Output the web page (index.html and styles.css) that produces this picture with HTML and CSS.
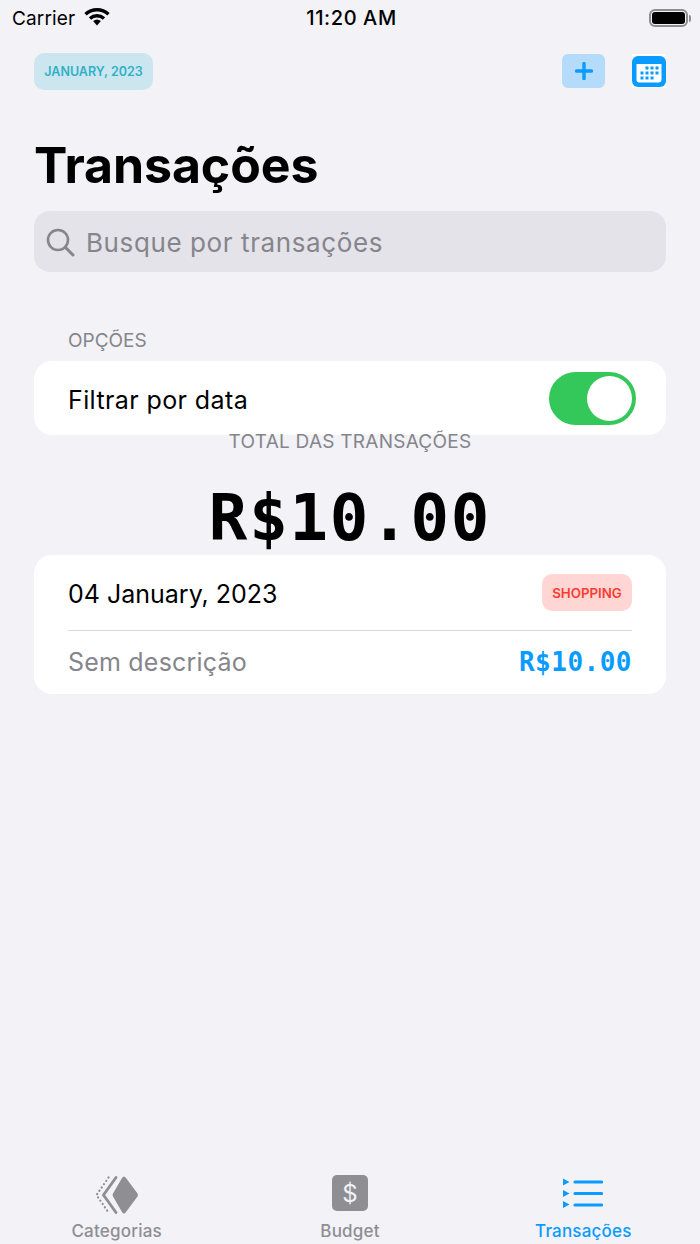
FILE: index.html
```html
<!DOCTYPE html>
<html lang="pt">
<head>
<meta charset="utf-8">
<title>Transações</title>
<link rel="stylesheet" href="styles.css">
</head>
<body>
<div class="app">
  <div class="status">
    <div class="status-left">
      <span class="carrier">Carrier</span>
      <svg class="wifi" width="26" height="19" viewBox="0 0 26 19"><path d="M1.500 7.200A17 17 0 0 1 24.500 7.200" fill="none" stroke="#000" stroke-width="3.400"/><path d="M6 11.400A10.500 10.500 0 0 1 20 11.400" fill="none" stroke="#000" stroke-width="3.400"/><path d="M13 18.500l-3.900-4.400a6 6 0 0 1 7.800 0z" fill="#000"/></svg>
    </div>
    <div class="status-time">11:20 AM</div>
    <div class="status-right">
      <div class="battery"><div class="battery-fill"></div></div>
      <div class="battery-cap"></div>
    </div>
  </div>

  <div class="topbar">
    <div class="pill">JANUARY, 2023</div>
    <div class="top-actions">
      <div class="plus-btn">
        <svg width="18" height="18" viewBox="0 0 18 18"><path d="M9 1.500V16.500M1.500 9H16.500" stroke="#0a9bff" stroke-width="3.400" stroke-linecap="round"/></svg>
      </div>
      <svg class="cal" width="34" height="34" viewBox="0 0 34 34">
        <rect width="34" height="34" fill="#fff"/>
        <rect width="34" height="31" y="2" rx="6" fill="#0a9bff"/>
        <path d="M4.500 10H29.500V25.500a3 3 0 0 1-3 3H7.500a3 3 0 0 1-3-3z" fill="#fff"/>
        <g fill="#0a9bff">
          <rect x="13.500" y="12.500" width="3" height="3"/><rect x="18.500" y="12.500" width="3" height="3"/><rect x="23.500" y="12.500" width="3" height="3"/>
          <rect x="8.500" y="17.500" width="3" height="3"/><rect x="13.500" y="17.500" width="3" height="3"/><rect x="18.500" y="17.500" width="3" height="3"/><rect x="23.500" y="17.500" width="3" height="3"/>
          <rect x="8.500" y="22.500" width="3" height="3"/><rect x="13.500" y="22.500" width="3" height="3"/><rect x="18.500" y="22.500" width="3" height="3"/>
        </g>
      </svg>
    </div>
  </div>

  <h1 class="title">Transações</h1>

  <div class="search">
    <svg width="30" height="30" viewBox="0 0 30 30"><circle cx="13" cy="13" r="10" fill="none" stroke="#85858b" stroke-width="2.600"/><path d="M20.500 20.500L28 28" stroke="#85858b" stroke-width="3" stroke-linecap="round"/></svg>
    <span class="search-text">Busque por transações</span>
  </div>

  <div class="section-label">OPÇÕES</div>
  <div class="card filter-card">
    <span class="filter-text">Filtrar por data</span>
    <div class="toggle"><div class="knob"></div></div>
  </div>

  <div class="total-label">TOTAL DAS TRANSAÇÕES</div>
  <div class="total-value">R$10.00</div>

  <div class="card tx-card">
    <div class="tx-row tx-top">
      <span class="tx-date">04 January, 2023</span>
      <span class="tag">SHOPPING</span>
    </div>
    <div class="tx-row tx-bottom">
      <span class="tx-desc">Sem descrição</span>
      <span class="tx-amount">R$10.00</span>
    </div>
  </div>

  <div class="spacer"></div>

  <nav class="tabs">
    <div class="tab">
      <svg width="44" height="40" viewBox="0 0 44 40">
        <path d="M29 1.500Q30 1.500 31 3L42.500 18.500Q43.500 20 42.500 21.500L31 37Q30 38.500 29 38.500Q28 38.500 27 37L18 21.500Q17 20 18 18.500L27 3Q28 1.500 29 1.500Z" fill="#8e8e93"/>
        <path d="M21 2.500L8.500 20L21 37.500" fill="none" stroke="#8e8e93" stroke-width="2.800" stroke-linecap="round"/>
        <path d="M13.500 2.500L1.500 20L13.500 37.500" fill="none" stroke="#8e8e93" stroke-width="2.200" stroke-linecap="round" stroke-dasharray="0.100 3.900"/>
      </svg>
      <span>Categorias</span>
    </div>
    <div class="tab">
      <div class="dollar">$</div>
      <span>Budget</span>
    </div>
    <div class="tab active">
      <svg width="40" height="36" viewBox="0 0 40 36">
        <path d="M0 3.500V10.500L6.500 7zM0 15V22L6.500 18.500zM0 26V33L6.500 29.500z" fill="#0a9bff"/>
        <path d="M12 7H38.500M12 18.500H38.500M12 30H38.500" stroke="#0a9bff" stroke-width="3.200" stroke-linecap="round"/>
      </svg>
      <span>Transações</span>
    </div>
  </nav>
</div>
</body>
</html>
```

FILE: styles.css
```css
* { box-sizing: border-box; }
html, body { margin: 0; padding: 0; }
body { background: #f2f2f7; font-family: Inter, "Liberation Sans", sans-serif; color: #000; }
.app { width: 700px; height: 1244px; display: flex; flex-direction: column; overflow: hidden; }

.status { height: 36px; display: grid; grid-template-columns: 1fr auto 1fr; align-items: center; padding: 0 9px 0 12px; }
.status-left { display: flex; align-items: center; gap: 9px; }
.carrier { font-size: 19px; letter-spacing: 0.15px; }
.wifi { margin-top: -3px; }
.status-time { font-size: 20px; font-weight: 500; letter-spacing: 0.6px; }
.status-right { display: flex; justify-content: flex-end; align-items: center; gap: 1px; }
.battery { width: 39px; height: 18px; border: 2px solid #8e8e8e; border-radius: 6px; padding: 1px; }
.battery-fill { width: 100%; height: 100%; background: #000; border-radius: 3px; }
.battery-cap { width: 2px; height: 7px; background: #8e8e8e; border-radius: 0 2px 2px 0; }

.topbar { display: flex; justify-content: space-between; align-items: center; margin: 17px 34px 0; height: 37px; }
.pill { width: 119px; height: 37px; border-radius: 10px; background: #cbe6ee; color: #30b0c7; font-size: 12.500px; font-weight: 600; display: flex; align-items: center; justify-content: center; }
.top-actions { display: flex; align-items: center; gap: 27px; margin-bottom: 1px; }
.plus-btn { width: 43px; height: 34px; border-radius: 6px; background: #b5dbfa; display: flex; align-items: center; justify-content: center; }
.cal { display: block; }

.title { margin: 45px 0 0 34px; font-size: 50px; line-height: 60px; font-weight: 700; letter-spacing: -0.1px; }

.search { margin: 16px 34px 0; height: 61px; border-radius: 16px; background: #e3e3e9; display: flex; align-items: center; gap: 11px; padding-left: 11px; color: #85858b; font-size: 26px; letter-spacing: 0.6px; }
.search-text { margin-top: 2px; }

.section-label { margin: 57px 0 0 68px; height: 24px; line-height: 24px; font-size: 19px; color: #85858b; }

.card { background: #fff; margin: 0 34px; border-radius: 18px; }
.filter-card { margin-top: 8px; height: 74px; display: flex; align-items: center; justify-content: space-between; padding: 0 30px 0 34px; font-size: 25px; letter-spacing: 0.4px; }
.filter-text { margin-top: 3px; }
.toggle { width: 87px; height: 53px; border-radius: 27px; background: #34c759; padding: 4px; display: flex; justify-content: flex-end; }
.knob { width: 45px; height: 45px; border-radius: 50%; background: #fff; }

.total-label { margin-top: -5px; text-align: center; height: 24px; line-height: 24px; font-size: 19px; letter-spacing: 0.25px; color: #85858b; }
.total-value { margin-top: 29px; text-align: center; height: 70px; line-height: 70px; font-family: "DejaVu Sans Mono", monospace; font-size: 64px; letter-spacing: 1.800px; font-weight: 700; }

.tx-card { margin-top: 2px; height: 139px; padding: 0 34px; }
.tx-row { display: flex; justify-content: space-between; align-items: center; }
.tx-top { height: 76px; border-bottom: 1px solid #d8d8dc; }
.tx-bottom { height: 62px; padding-bottom: 1px; }
.tx-date { font-size: 25px; margin-top: 2px; }
.tag { width: 90px; height: 37px; border-radius: 10px; background: #ffd6d4; color: #ff3b30; font-size: 13.300px; font-weight: 600; display: flex; align-items: center; justify-content: center; }
.tx-desc { font-size: 25px; letter-spacing: 0.2px; color: #85858b; }
.tx-amount { font-family: "DejaVu Sans Mono", monospace; font-size: 26px; letter-spacing: 0.500px; font-weight: 700; color: #0a9bff; }

.spacer { flex: 1; }

.tabs { height: 72px; display: grid; grid-template-columns: repeat(3, 1fr); }
.tab { display: flex; flex-direction: column; align-items: center; height: 72px; padding-top: 2px; color: #8e8e93; font-size: 17px; font-weight: 500; letter-spacing: 0.2px; }
.tab svg { display: block; }
.tab svg, .dollar { margin-top: 1px; }
.tab span { margin-top: auto; margin-bottom: 2px; line-height: 22px; height: 22px; }
.tab.active { color: #0a9bff; }
.dollar { width: 36px; height: 36px; border-radius: 5px; background: #8e8e93; color: #f2f2f7; display: flex; align-items: center; justify-content: center; font-size: 24px; font-weight: 400; }
```
